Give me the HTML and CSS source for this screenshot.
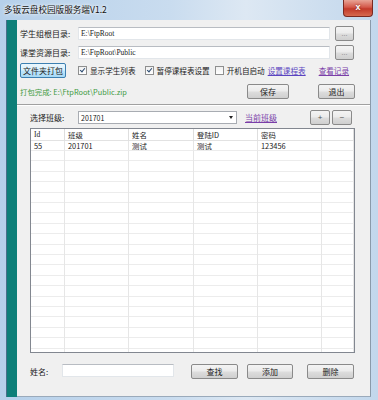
FILE: index.html
```html
<!DOCTYPE html>
<html lang="zh">
<head>
    <meta charset="UTF-8">
    <title>多钣云盘校园版服务端V1.2</title>
    <link rel="stylesheet" href="styles.css">
</head>
<body>
<div class="window">
    <div class="titlebar">
        <span class="title">多钣云盘校园版服务端V1.2</span>
        <span class="close">x</span>
    </div>
    <div class="frame">
        <div class="side"></div>
        <div class="client">
            <div class="paths">
                <span class="lbl">学生组根目录:</span>
                <div class="input mono">E:\FtpRoot</div>
                <button class="btn dots">...</button>
                <span class="lbl">课堂资源目录:</span>
                <div class="input mono">E:\FtpRoot\Public</div>
                <button class="btn dots">...</button>
            </div>

            <div class="options">
                <button class="btn focus pack">文件夹打包</button>
                <span class="check on c1"><i></i>显示学生列表</span>
                <span class="check on c2"><i></i>暂停课程表设置</span>
                <span class="check c3"><i></i>开机自启动</span>
                <a class="link l1">设置课程表</a>
                <a class="link l2">查看记录</a>
            </div>

            <div class="status">
                <span class="done">打包完成: E:\FtpRoot\Public.zip</span>
                <button class="btn save">保存</button>
                <button class="btn quit">退出</button>
            </div>

            <div class="sep"></div>

            <div class="lower">
                <div class="classbar">
                    <span class="lbl">选择班级:</span>
                    <div class="select"><span>201701</span><b></b></div>
                    <a class="link cur">当前班级</a>
                    <button class="btn sq plus">+</button>
                    <button class="btn sq minus">−</button>
                </div>

                <div class="grid">
                    <div class="gr head">
                        <span class="mono">Id</span><span>班级</span><span>姓名</span><span>登陆ID</span><span>密码</span><span></span>
                    </div>
                    <div class="gr">
                        <span>55</span><span>201701</span><span>测试</span><span>测试</span><span>123456</span><span></span>
                    </div>
                    <div class="gr fill">
                        <span></span><span></span><span></span><span></span><span></span><span></span>
                    </div>
                </div>

                <div class="searchbar">
                    <span class="lbl">姓名:</span>
                    <div class="input name"></div>
                    <button class="btn find">查找</button>
                    <button class="btn add">添加</button>
                    <button class="btn del">删除</button>
                </div>
            </div>
        </div>
    </div>
</div>
</body>
</html>
```

FILE: styles.css
```css
body {
    margin: 0;
    font-family: "Noto Sans CJK SC", sans-serif;
    font-size: 8px;
    color: #1a1a1a;
}

.window {
    width: 378px;
    height: 400px;
    display: flex;
    flex-direction: column;
    background: linear-gradient(90deg, #b6d0ea 0%, #c9dcef 45%, #dde8f3 65%, #c2d7ec 100%);
    box-sizing: border-box;
    padding: 0 7px 3px 0;
}

.titlebar {
    height: 20px;
    display: flex;
    align-items: flex-start;
    justify-content: space-between;
}

.title {
    margin: 3px 0 0 4px;
    font-size: 8.6px;
    color: #111;
    text-shadow: 0 0 4px #fff, 0 0 2px #fff;
}

.close {
    width: 30px;
    height: 17px;
    margin-right: -2px;
    box-sizing: border-box;
    border: 1px solid #7a2a22;
    border-top: none;
    border-radius: 0 0 4px 4px;
    background: linear-gradient(#e8a496 0%, #d4594a 45%, #c23a2a 55%, #d66a50 100%);
    color: #fff;
    font-family: "Liberation Sans", sans-serif;
    font-weight: bold;
    font-size: 9px;
    text-align: center;
    line-height: 14px;
    text-shadow: 0 0 2px #6a1a10;
}

.frame {
    flex: 1;
    display: flex;
    padding-left: 5px;
    border-left: 1px solid transparent;
}

.side {
    flex-shrink: 0;
    width: 10px;
    background: #0e7f78;
    border-left: 1px solid #4a6f8a;
}

.client {
    flex: 1;
    min-width: 0;
    background: #f0f0f0;
    border-right: 1px solid #8a9aaa;
    border-bottom: 1px solid #9aaabb;
    padding: 6px 15px 0 3px;
    box-sizing: border-box;
}

.lbl {
    white-space: nowrap;
}

.mono {
    font-family: "Liberation Serif", serif;
    font-size: 7.5px;
}

.paths {
    display: grid;
    grid-template-columns: 53px 252px 19px;
    grid-auto-rows: 15px;
    column-gap: 5px;
    row-gap: 4px;
    align-items: center;
}

.input {
    height: 13px;
    box-sizing: border-box;
    background: #fff;
    border: 1px solid #e2e6ea;
    border-top-color: #b8bcc2;
    padding-left: 2px;
    line-height: 11px;
}

.btn {
    height: 15px;
    box-sizing: border-box;
    padding: 0;
    border: 1px solid #8a8a8a;
    border-radius: 2px;
    background: linear-gradient(#f4f4f4 0%, #ebebeb 48%, #dddddd 52%, #cfcfcf 100%);
    font-family: "Noto Sans CJK SC", sans-serif;
    font-size: 8px;
    color: #222;
    line-height: 12px;
}

.btn.focus {
    border-color: #3c7fb1;
    background: linear-gradient(#eaf6fd 0%, #d9f0fc 48%, #bee6fd 52%, #a7d9f5 100%);
}

.dots {
    width: 19px;
    font-family: "Liberation Sans", sans-serif;
    color: #777;
    font-size: 7px;
}

.options {
    display: flex;
    align-items: center;
    height: 15px;
    margin-top: 3px;
    font-size: 7.6px;
}

.pack {
    flex-shrink: 0;
    width: 46px;
}

.check {
    display: flex;
    align-items: center;
    white-space: nowrap;
}

.check i {
    flex-shrink: 0;
    width: 7px;
    height: 7px;
    margin-right: 3px;
    border: 1px solid #8e8f8f;
    background: linear-gradient(#f0f0f0, #fff);
    position: relative;
}

.check.on i::after {
    content: "";
    position: absolute;
    left: 2px;
    top: 0;
    width: 2px;
    height: 4px;
    border: solid #2a4a70;
    border-width: 0 1px 1px 0;
    transform: rotate(40deg);
}

.c1 { margin-left: 12px; }
.c2 { margin-left: 9px; }
.c3 { margin-left: 5px; }

.link {
    color: #7a3ea8;
    text-decoration: underline;
    white-space: nowrap;
}

.l1 { margin-left: 3px; color: #5a44c0; }
.l2 { margin-left: 13px; }

.status {
    display: flex;
    align-items: center;
    height: 15px;
    margin-top: 6px;
}

.done {
    flex: 1;
    color: #3e9a3e;
    font-size: 7.4px;
    white-space: nowrap;
}

.save {
    width: 42px;
}

.quit {
    width: 37px;
    margin-left: 29px;
}

.sep {
    margin: 5px -15px 0 -3px;
    height: 0;
    border-top: 1px solid #a0a0a0;
    border-bottom: 1px solid #fff;
}

.lower {
    padding-left: 10px;
}

.classbar {
    display: flex;
    align-items: center;
    height: 15px;
    margin-top: 4px;
}

.classbar .lbl {
    width: 48px;
}

.select {
    width: 159px;
    height: 13px;
    box-sizing: border-box;
    background: #fff;
    border: 1px solid #a8acb2;
    display: flex;
    align-items: center;
    justify-content: space-between;
    padding: 0 3px 0 2px;
    font-size: 7px;
}

.select b {
    width: 0;
    height: 0;
    border: 2.5px solid transparent;
    border-top: 3px solid #222;
    border-bottom: none;
}

.cur {
    margin-left: 8px;
}

.sq {
    width: 20px;
    color: #555;
    font-family: "Liberation Sans", sans-serif;
    font-size: 8px;
}

.plus {
    margin-left: 33px;
}

.minus {
    margin-left: 2px;
}

.grid {
    width: 325px;
    height: 225px;
    margin-top: 3px;
    box-sizing: border-box;
    border: 1px solid #828790;
    background: #fff;
    display: flex;
    flex-direction: column;
}

.gr {
    display: grid;
    grid-template-columns: 34px 64px 65px 64px 64px 1fr;
    height: 10.4px;
    font-size: 7.4px;
    line-height: 9px;
}

.gr span {
    border-right: 1px solid #e6e6e6;
    border-bottom: 1px solid #ececec;
    padding-left: 3px;
    white-space: nowrap;
    overflow: hidden;
}

.gr.head {
    height: 12px;
    line-height: 11px;
}

.gr.head span {
    border-right-color: #dedede;
    border-bottom-color: #e2e2e2;
}

.gr.fill {
    flex: 1;
    height: auto;
}

.gr.fill span {
    border-bottom: none;
    background: repeating-linear-gradient(to bottom, transparent 0, transparent 9.4px, #ececec 9.4px, #ececec 10.4px);
}

.searchbar {
    display: flex;
    align-items: center;
    height: 15px;
    margin-top: 11px;
}

.searchbar .lbl {
    width: 32px;
}

.name {
    width: 112px;
    margin-top: -2px;
}

.find {
    width: 47px;
    margin-left: 17px;
}

.add {
    width: 46px;
    margin-left: 9px;
}

.del {
    width: 47px;
    margin-left: 14px;
}
```
